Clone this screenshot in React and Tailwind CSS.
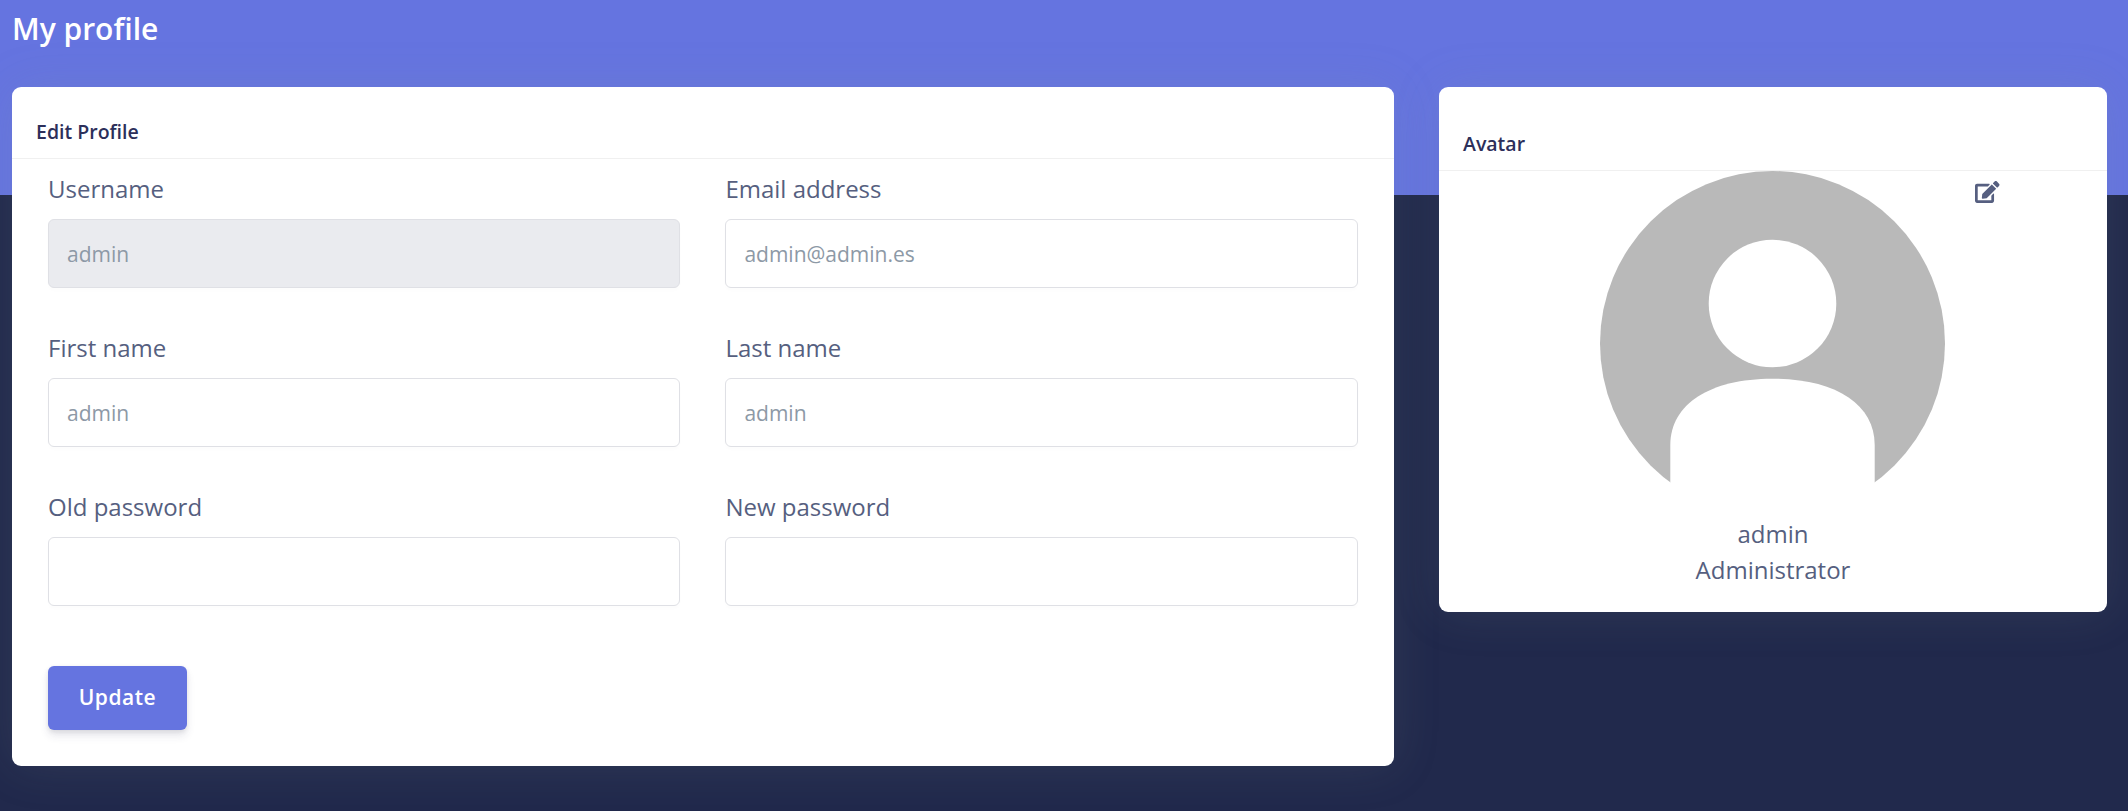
import { FaEdit } from 'react-icons/fa';

const fields = [
  { label: 'Username', placeholder: 'admin', disabled: true },
  { label: 'Email address', placeholder: 'admin@admin.es', type: 'email' },
  { label: 'First name', placeholder: 'admin' },
  { label: 'Last name', placeholder: 'admin' },
  { label: 'Old password', type: 'password' },
  { label: 'New password', type: 'password' },
];

function Card({ children, className }) {
  return (
    <section
      className={`rounded-[9px] bg-white shadow-[0_0_48px_0_rgba(136,152,150,0.15)] ${className}`}
    >
      {children}
    </section>
  );
}

function Field({ label, placeholder, disabled, type = 'text' }) {
  return (
    <label className="flex flex-col gap-3 text-[24px] leading-9">
      {label}
      <input
        type={type}
        placeholder={placeholder}
        disabled={disabled}
        className="h-[69px] w-full rounded-[6px] border border-[#dfe0e5] bg-white px-[18px] text-[21px] shadow-[0_3px_3px_rgba(0,0,0,0.01)] placeholder:text-[#8d99a6] placeholder:opacity-100 disabled:bg-[#eaebef]"
      />
    </label>
  );
}

function Avatar() {
  return (
    <svg viewBox="0 0 345 345" className="h-[345px] w-[345px]" aria-hidden="true">
      <circle cx="172.5" cy="172.5" r="172.5" fill="#b9b9b9" />
      <circle cx="172.5" cy="132.5" r="63.8" fill="#fff" />
      <path
        d="M70.3 345V274C70.3 233 110 207.7 172.5 207.7S274.7 233 274.7 274V345Z"
        fill="#fff"
      />
    </svg>
  );
}

export default function App() {
  return (
    <div className="h-[811px] w-full overflow-hidden bg-[linear-gradient(#6574e0_195px,#21294c_195px)] px-3 font-['Open_Sans',sans-serif] text-[#565f80]">
      <h1 className="h-[87px] pt-[6px] text-[30px] leading-[45px] font-semibold text-white">My profile</h1>
      <main className="flex items-start gap-[45px]">
        <Card className="h-[679px] w-[1382px]">
          <header className="flex h-[72px] items-end border-b border-black/6 px-6 pb-3">
            <h2 className="text-[19.5px] leading-[29px] font-semibold text-[#2c2f5a]">Edit Profile</h2>
          </header>
          <form className="px-9 pt-3">
            <div className="grid grid-cols-[632px_632.6px] gap-x-[45.4px] gap-y-[42px]">
              {fields.map((field) => (
                <Field key={field.label} {...field} />
              ))}
            </div>
            <button
              type="button"
              className="mt-[60px] h-16 w-[139px] rounded-[6px] bg-[#6574e0] text-[21px] font-semibold tracking-[0.025em] text-white shadow-[0_6px_9px_rgba(50,50,93,0.11),0_1.5px_4.5px_rgba(0,0,0,0.08)]"
            >
              Update
            </button>
          </form>
        </Card>
        <Card className="h-[525px] w-[668px]">
          <header className="flex h-[84px] items-end border-b border-black/6 px-6 pb-3">
            <h2 className="text-[19.5px] leading-[29px] font-semibold text-[#2c2f5a]">Avatar</h2>
          </header>
          <div className="grid grid-cols-[161px_345px_1fr]">
            <div className="col-start-2">
              <Avatar />
            </div>
            <button type="button" aria-label="Edit avatar" className="mt-[9px] ml-[30px] h-6 self-start">
              <FaEdit className="h-[22px] w-[24.5px]" />
            </button>
          </div>
          <div className="text-center text-[24px] leading-9">
            <p>admin</p>
            <p>Administrator</p>
          </div>
        </Card>
      </main>
    </div>
  );
}
